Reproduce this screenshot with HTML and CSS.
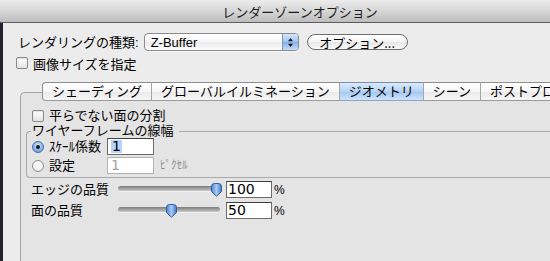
FILE: index.html
```html
<!DOCTYPE html>
<html lang="ja">
<head>
<meta charset="utf-8">
<title>レンダーゾーンオプション</title>
<link rel="stylesheet" href="styles.css">
</head>
<body>
<div class="window">
  <div class="titlebar">レンダーゾーンオプション</div>
  <div class="content">
    <div class="row r1">
      <span class="label">レンダリングの種類:</span>
      <div class="popup">
        <span class="pv">Z-Buffer</span>
        <span class="stepper">
          <svg width="7" height="11" viewBox="0 0 7 11"><path d="M3.5 1 L6 4.2 H1 Z M3.5 10 L6 6.8 H1 Z" fill="#1a1a1a"/></svg>
        </span>
      </div>
      <button class="btn">オプション...</button>
    </div>
    <div class="row r2"><span class="cb"></span><span>画像サイズを指定</span></div>

    <div class="tabbox">
      <div class="tabs">
        <span class="tab first">シェーディング</span>
        <span class="tab">グローバルイルミネーション</span>
        <span class="tab sel">ジオメトリ</span>
        <span class="tab">シーン</span>
        <span class="tab">ポストプロ</span>
      </div>
      <div class="pane">
        <div class="row prow"><span class="cb"></span><span>平らでない面の分割</span></div>
        <fieldset class="group">
          <legend>ワイヤーフレームの線幅</legend>
          <div class="rrow">
            <span class="radio on"><span class="dot"></span></span>
            <span class="rlabel">ｽｹｰﾙ係数</span>
            <span class="field"><span class="selx">1</span></span>
          </div>
          <div class="rrow">
            <span class="radio"></span>
            <span class="rlabel">設定</span>
            <span class="field dis">1</span>
            <span class="unit">ﾋﾟｸｾﾙ</span>
          </div>
        </fieldset>
        <div class="srow first-s">
          <span class="slabel">エッジの品質</span>
          <div class="slider">
            <span class="track"></span>
            <svg class="thumb" style="left:92px" width="13" height="14" viewBox="0 0 13 14"><defs><linearGradient id="tg" x1="0" y1="0" x2="1" y2="0"><stop offset="0" stop-color="#4e86d6"/><stop offset="0.5" stop-color="#a9c9f2"/><stop offset="1" stop-color="#3f77c8"/></linearGradient></defs><path d="M1.5 3.5 Q1.5 0.5 4.5 0.5 H8.5 Q11.5 0.5 11.5 3.5 V8.5 L6.5 13.2 L1.5 8.5 Z" fill="url(#tg)" stroke="#2f5c9e" stroke-width="1"/></svg>
          </div>
          <span class="field num">100</span>
          <span class="pct">%</span>
        </div>
        <div class="srow">
          <span class="slabel">面の品質</span>
          <div class="slider">
            <span class="track"></span>
            <svg class="thumb" style="left:47px" width="13" height="14" viewBox="0 0 13 14"><path d="M1.5 3.5 Q1.5 0.5 4.5 0.5 H8.5 Q11.5 0.5 11.5 3.5 V8.5 L6.5 13.2 L1.5 8.5 Z" fill="url(#tg)" stroke="#2f5c9e" stroke-width="1"/></svg>
          </div>
          <span class="field num">50</span>
          <span class="pct">%</span>
        </div>
      </div>
    </div>
  </div>
</div>
</body>
</html>
```
FILE: styles.css
```css
* { box-sizing: border-box; }
html, body { margin: 0; height: 100%; }
body {
  overflow: hidden;
  background: #262634;
  font-family: "Liberation Sans", "Noto Sans CJK JP", sans-serif;
  font-size: 13px;
  color: #000;
}
.window {
  width: 600px;
  height: 261px;
  display: flex;
  flex-direction: column;
}
.titlebar {
  flex: none;
  height: 23px;
  background: linear-gradient(#ececec, #d6d6d6 50%, #bdbdbd);
  border-bottom: 1px solid #5c5c5c;
  display: flex;
  align-items: center;
  justify-content: center;
  font-family: "Noto Sans CJK JP", sans-serif;
  font-size: 13px;
  line-height: 1;
  color: #1c1c1c;
  padding-top: 1px;
}
.content {
  flex: 1;
  background: #ececec;
  border-left: 3px solid #23232f;
  padding: 10px 0 0 15px;
  display: flex;
  flex-direction: column;
}
.row { display: flex; align-items: center; }
.r1 { height: 18px; }
.label { line-height: 1; }
.popup {
  margin-left: 5px;
  width: 155px;
  height: 18px;
  border: 1px solid #8b8b8b;
  border-radius: 4px;
  background: linear-gradient(#ffffff, #f7f7f7 50%, #ececec 51%, #fbfbfb);
  display: flex;
  align-items: center;
  overflow: hidden;
  box-shadow: 0 1px 0 rgba(255,255,255,0.6);
}
.pv { flex: 1; padding-left: 6px; font-size: 13px; line-height: 1; }
.stepper {
  width: 16px;
  height: 100%;
  border-left: 1px solid #7f97b8;
  background: linear-gradient(#d5e6fb, #9fc3f0 50%, #82b1ec 51%, #c4ddfa);
  display: flex;
  align-items: center;
  justify-content: center;
}
.btn {
  margin-left: 8px;
  width: 101px;
  height: 16px;
  padding: 0;
  border: 1px solid #6e6e6e;
  border-radius: 9px;
  background: linear-gradient(#ffffff, #f4f4f4 50%, #e6e6e6 51%, #fbfbfb);
  font-family: "Noto Sans CJK JP", sans-serif;
  font-size: 13px;
  line-height: 1;
  color: #000;
  display: flex;
  align-items: center;
  justify-content: center;
}
.r2 { height: 14px; margin-top: 5px; margin-left: -2px; }
.cb {
  flex: none;
  width: 12px;
  height: 12px;
  margin-right: 5px;
  border: 1px solid #8a8a8a;
  border-radius: 2px;
  background: linear-gradient(#ffffff, #f2f2f2 50%, #e3e3e3);
  box-shadow: inset 0 1px 1px rgba(0,0,0,0.12);
}
.tabbox {
  flex: 1;
  margin-top: 12px;
  margin-left: 2px;
  display: flex;
  flex-direction: column;
}
.tabs {
  position: relative;
  z-index: 1;
  display: flex;
  height: 19px;
  margin-left: 22px;
  margin-bottom: -9px;
  white-space: nowrap;
  overflow: hidden;
}
.tab {
  flex: none;
  height: 19px;
  padding: 0 9px;
  display: flex;
  align-items: center;
  line-height: 1;
  border-top: 1px solid #8e8e8e;
  border-bottom: 1px solid #9a9a9a;
  border-left: 1px solid #a6a6a6;
  background: linear-gradient(#ffffff, #f6f6f6 50%, #e9e9e9 51%, #f7f7f7);
}
.tab.first { border-left-color: #8e8e8e; border-radius: 4px 0 0 4px; }
.tab.sel {
  background: linear-gradient(#dbeafc, #b4d3f6 50%, #a0c6f1 51%, #cfe4fb);
  border-top-color: #7a8fae;
  border-bottom-color: #8ea6c6;
}
.pane {
  flex: 1;
  background: #e4e4e4;
  border-left: 1px solid #a4a4a4;
  border-top: 1px solid #a4a4a4;
  border-top-left-radius: 5px;
  padding: 15px 0 0 5px;
  display: flex;
  flex-direction: column;
}
.prow { height: 15px; margin-left: 6px; line-height: 1; }
.group {
  margin: 2px 0 0 0;
  padding: 1px 0 3px 5px;
  border: 1px solid #a9a9a9;
  border-right: none;
  border-radius: 4px 0 0 4px;
  min-width: 0;
}
.group legend {
  padding: 0 6px 0 1px;
  margin-left: -1px;
  line-height: 12px;
  font-size: 13px;
}
.rrow { display: flex; align-items: center; height: 17px; }
.rrow + .rrow { margin-top: 2px; }
.radio {
  flex: none;
  width: 12px;
  height: 12px;
  border-radius: 50%;
  border: 1px solid #8a8a8a;
  background: linear-gradient(#ffffff, #ececec);
  display: flex;
  align-items: center;
  justify-content: center;
}
.radio.on {
  border-color: #4a6c9c;
  background: radial-gradient(circle at 50% 35%, #d8e8fc, #7fb0ec 60%, #5b92dc);
}
.dot { width: 4px; height: 4px; border-radius: 50%; background: #1b1b1b; }
.rlabel { width: 58px; margin-left: 5px; line-height: 1; }
.field {
  flex: none;
  width: 47px;
  height: 17px;
  border: 1px solid #6b6b6b;
  border-top-color: #3f3f3f;
  background: #fff;
  font-family: "DejaVu Sans", sans-serif;
  font-size: 14px;
  line-height: 15px;
  padding-left: 3px;
  display: flex;
  align-items: center;
}
.selx { background: #b5d5fd; padding: 0 1px; line-height: 13px; }
.field.dis { border-color: #b3b3b3; color: #a3a3a3; }
.unit { margin-left: 6px; font-size: 11px; color: #8e8e8e; line-height: 1; }
.srow { display: flex; align-items: center; height: 17px; margin-left: 5px; }
.first-s { margin-top: 3px; }
.srow + .srow { margin-top: 4px; }
.slabel { width: 87px; line-height: 1; }
.slider { position: relative; width: 103px; height: 17px; }
.track {
  position: absolute;
  left: 0;
  right: 1px;
  top: 5px;
  height: 5px;
  border-radius: 3px;
  background: linear-gradient(#7b7b7b, #a9a9a9 60%, #c9c9c9);
  box-shadow: 0 1px 0 rgba(255,255,255,0.5);
}
.thumb { position: absolute; top: 2px; }
.num { margin-left: 5px; width: 46px; padding-left: 1px; }
.pct { margin-left: 2px; font-size: 12px; line-height: 1; }
```
